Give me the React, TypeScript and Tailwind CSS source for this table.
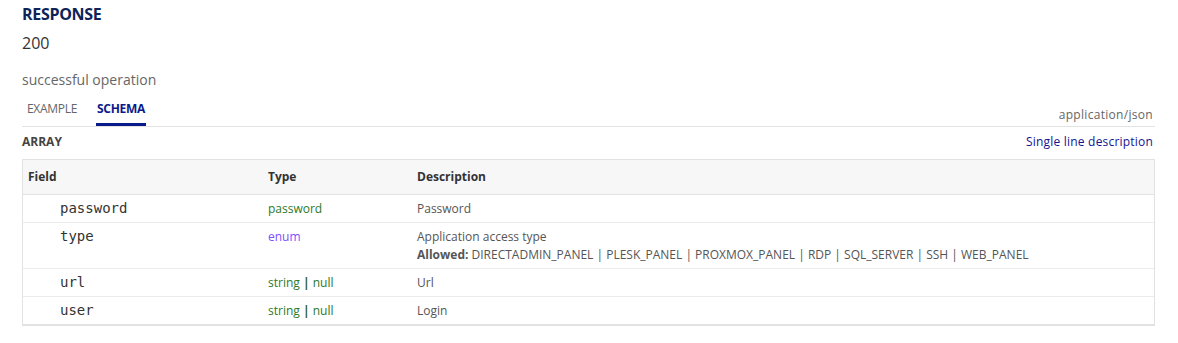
import React from "react";

const sans = "font-['Open_Sans',sans-serif]";
const mono = "font-['DejaVu_Sans_Mono',monospace]";

type Row = { name: string; type: React.ReactNode; desc: React.ReactNode };

const Null = () => (
  <span>
    <span className="text-[#2b7a2b]">string</span>
    <span className="text-[#1f5f1f] font-bold"> | </span>
    <span className="text-[#2b7a2b]">null</span>
  </span>
);

const rows: Row[] = [
  { name: "password", type: <span className="text-[#2b7a2b]">password</span>, desc: "Password" },
  {
    name: "type",
    type: <span className="text-[#7d4dff]">enum</span>,
    desc: (
      <div className="flex flex-col gap-[3px]">
        <span>Application access type</span>
        <span>
          <b className="text-[#555]">Allowed:</b> DIRECTADMIN_PANEL | PLESK_PANEL | PROXMOX_PANEL | RDP | SQL_SERVER | SSH | WEB_PANEL
        </span>
      </div>
    ),
  },
  { name: "url", type: <Null />, desc: "Url" },
  { name: "user", type: <Null />, desc: "Login" },
];

export default function App() {
  return (
    <div className={`${sans} bg-white w-[1178px] h-[343px] px-[22px] pt-[4px]`}>
      <div className="w-[1133px]">
        <div className="text-[16px] font-bold text-[#0e2358] leading-[20px] tracking-[-0.3px]">RESPONSE</div>
        <div className="text-[16px] text-[#333] leading-[20px] mt-[9px]">200</div>
        <div className="text-[14px] text-[#666] leading-[18px] mt-[18px]">successful operation</div>
        <div className="flex items-end justify-between border-b border-[#e3e3e3] mt-[11px]">
          <div className="flex text-[12px] leading-[16px]">
            <div className="px-[5px] pb-[8px] pt-[1px] text-[#666] uppercase tracking-[-0.3px]">Example</div>
            <div className="ml-[14px] px-[1px] pb-[6px] pt-[1px] text-[#0b1a8a] font-bold uppercase border-b-[3px] border-[#0b1a8a] tracking-[-0.3px]">
              Schema
            </div>
          </div>
          <div className="text-[12px] text-[#666] leading-[16px] pb-[3px] pr-[2px] tracking-[0.3px]">application/json</div>
        </div>
        <div className="flex justify-between items-center mt-[7px] text-[12px] leading-[16px]">
          <div className="font-bold text-[#444]">ARRAY</div>
          <div className="text-[#14148f] pr-[2px] tracking-[0.2px]">Single line description</div>
        </div>
        <div className="mt-[9px] border border-[#e2e2e2] border-b-2 text-[12px]">
          <div className="flex bg-[#f7f7f7] h-[35px] items-center font-bold text-[#333] border-b border-[#e2e2e2]">
            <div className="w-[245px] pl-[5px]">Field</div>
            <div className="w-[149px]">Type</div>
            <div>Description</div>
          </div>
          {rows.map((r, i) => (
            <div
              key={r.name}
              className={`flex items-start py-[6px] ${i < rows.length - 1 ? "border-b border-[#ececec]" : ""}`}
            >
              <div className={`w-[245px] pl-[37px] ${mono} text-[14px] text-[#333] leading-[15px]`}>{r.name}</div>
              <div className="w-[149px] leading-[15px]">{r.type}</div>
              <div className="text-[#555] leading-[15px]">{r.desc}</div>
            </div>
          ))}
        </div>
      </div>
    </div>
  );
}
